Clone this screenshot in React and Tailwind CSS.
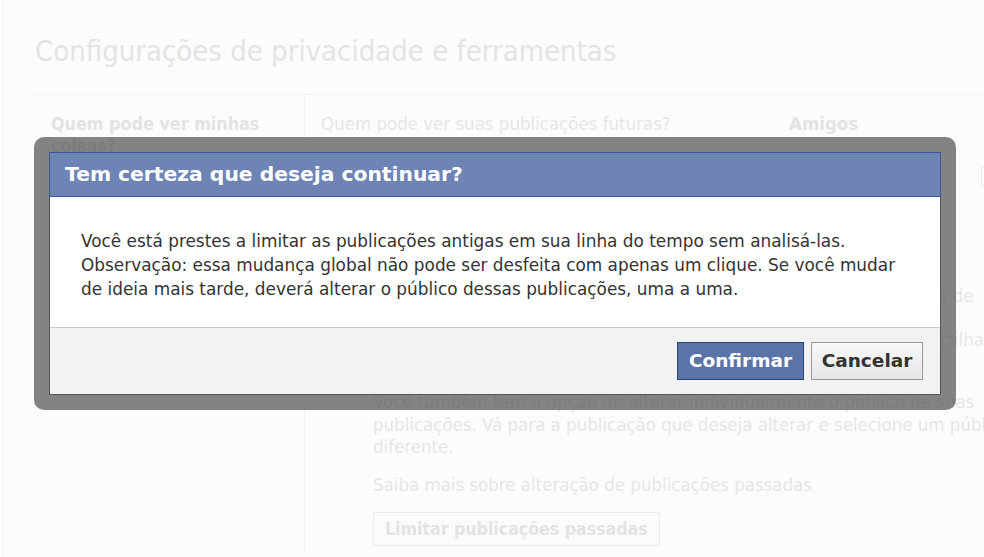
import React from "react";

const bgFont = { fontFamily: '"DejaVu Sans Condensed", "Liberation Sans Narrow", "DejaVu Sans", sans-serif' };
const dlgFont = { fontFamily: '"DejaVu Sans", "Liberation Sans", sans-serif' };

export default function App() {
  return (
    <div className="relative w-[984px] h-[557px] overflow-hidden bg-[#fcfcfc]" style={bgFont}>
      {/* background page */}
      <div className="absolute left-[3px] top-0 bottom-0 w-px bg-[#f2f2f2]" />
      <div className="pl-[35px] pt-[33px]">
        <h1 className="text-[29px] leading-[36px] text-[#e4e4e4] whitespace-nowrap">
          Configurações de privacidade e ferramentas
        </h1>
        <div className="mt-[25px] h-px bg-[#f1f1f1]" />
      </div>
      <div className="flex pl-[35px]">
        <div className="w-[270px] shrink-0 pl-[16px] pt-[18px] border-r border-[#f3f3f3] h-[460px]">
          <div className="text-[17.8px] leading-[22px] font-bold text-[#e3e3e3] w-[230px]">
            Quem pode ver minhas coisas?
          </div>
        </div>
        <div className="flex-1 pt-[18px]">
          <div className="flex pl-[16px] text-[18.5px] leading-[22px] text-[#e6e6e6] whitespace-nowrap">
            <span className="w-[468px]">Quem pode ver suas publicações futuras?</span>
            <span className="font-bold text-[#e3e3e3]">Amigos</span>
          </div>
          <div className="pl-[68px] pt-[150px] text-[18.5px] leading-[22px] text-[#e8e8e8] whitespace-nowrap">
            <p>Limite o público das publicações que você compartilhou com amigos de</p>
            <p className="mt-[22px]">amigos ou público geral para amigos somente. Se você tiver compartilhado com alguém</p>
          </div>
          <div className="pl-[68px] pt-[40px] text-[18.5px] leading-[22.5px] text-[#e6e6e6] whitespace-nowrap">
            <p>Você também tem a opção de alterar individualmente o público de suas</p>
            <p>publicações. Vá para a publicação que deseja alterar e selecione um público</p>
            <p>diferente.</p>
            <p className="mt-[15px]">Saiba mais sobre alteração de publicações passadas</p>
            <button className="mt-[16px] h-[34px] px-[11px] border border-[#ececec] bg-[#fbfbfb] text-[17.6px] font-bold text-[#e3e3e3]">
              Limitar publicações passadas
            </button>
          </div>
        </div>
      </div>
      <div className="absolute left-[981px] top-[166px] w-[6px] h-[22px] border border-[#eaeaea] rounded-sm" />

      {/* dialog overlay */}
      <div className="absolute left-[34px] top-[137px] w-[922px] rounded-[10px] bg-[rgba(82,82,82,0.71)] p-[15px]" style={dlgFont}>
        <div className="border border-[#555] bg-white">
          <div className="h-[45px] bg-[#6d84b4] border border-[#3b5998] -m-px flex items-center pl-[15px]">
            <span className="text-white font-bold text-[20.3px]">Tem certeza que deseja continuar?</span>
          </div>
          <div className="px-[31px] pt-[33px] pb-[26px] text-[16.9px] leading-[24px] text-[#333] whitespace-nowrap">
            Você está prestes a limitar as publicações antigas em sua linha do tempo sem analisá-las.
            <br />
            Observação: essa mudança global não pode ser desfeita com apenas um clique. Se você mudar
            <br />
            de ideia mais tarde, deverá alterar o público dessas publicações, uma a uma.
          </div>
          <div className="h-[67px] border-t border-[#ccc] bg-[#f2f2f2] flex items-center justify-end gap-[7px] pr-[17px]">
            <button className="h-[38px] w-[127px] bg-[#5b74a8] border border-[#29447e] text-white font-bold text-[18.5px]">
              Confirmar
            </button>
            <button className="h-[38px] w-[112px] bg-gradient-to-b from-[#f8f8f8] to-[#e6e6e6] border border-[#999] text-[#333] font-bold text-[18.5px]">
              Cancelar
            </button>
          </div>
        </div>
      </div>
    </div>
  );
}
